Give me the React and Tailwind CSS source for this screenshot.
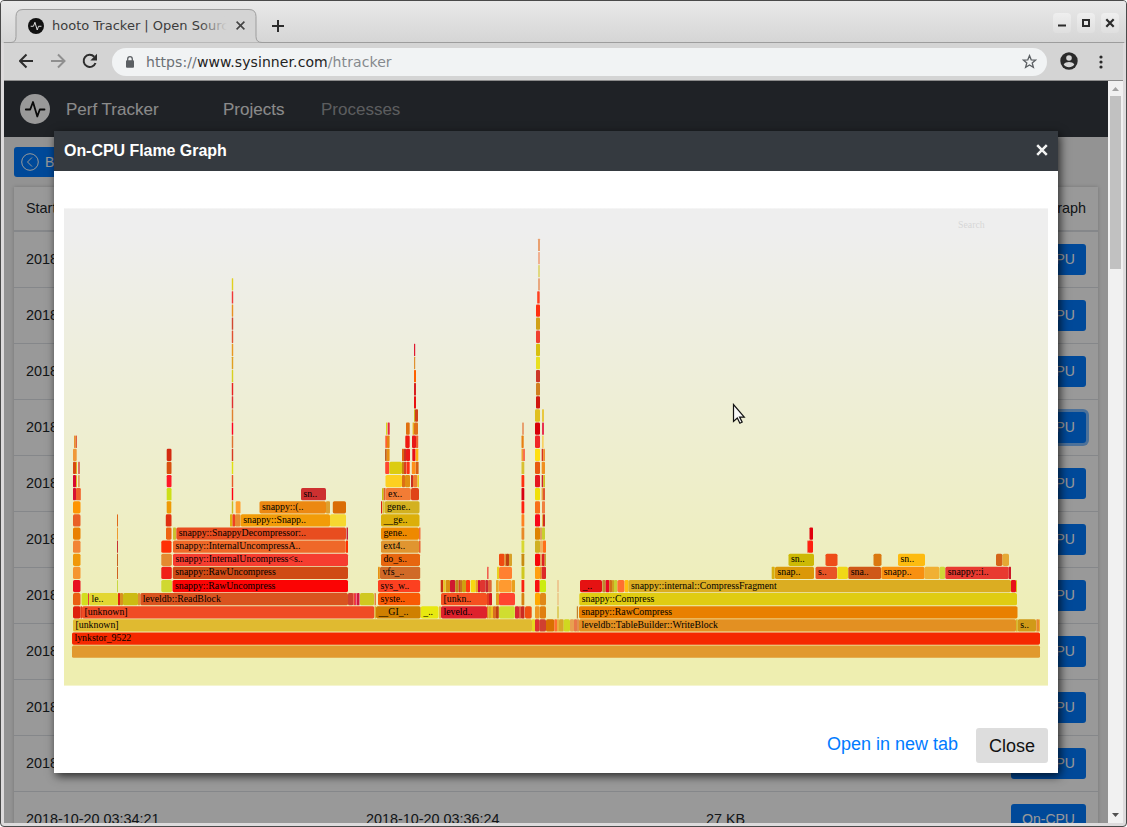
import React from "react";

const BASE_Y = 645.5;
const STEP = 13.12;

// Each frame is [left, right, colour, label?]; index 0 is the bottom of the stack.
const frames = [
  [[72, 1040, "#e1992e"]],
  [[72, 1040, "#f52800", "lynkstor_9522"]],
  [[73, 532, "#e0ba30", "[unknown]"], [532, 535, "#e6d820"], [535, 539.2, "#dd3030"], [539.2, 546, "#d04030"], [546, 554.3, "#d97000"], [554.3, 557, "#ff7030"], [557, 559, "#e8b040"], [559, 563.7, "#d8a828"], [563.7, 570, "#d0d820"], [570, 574, "#e8a050"], [574, 577, "#e87848"], [577, 579, "#e09050"], [579, 1016, "#e39022", "leveldb::TableBuilder::WriteBlock"], [1016, 1017.7, "#d8b828"], [1017.7, 1036, "#d09a18", "s.."], [1036.3, 1039, "#e88830"], [1039, 1040, "#f0b030"]],
  [[73, 80.5, "#de200d"], [80.5, 82, "#e04020"], [82, 374.3, "#f04c24", "[unknown]"], [374.6, 376, "#d8b030"], [376, 420.6, "#cf8000", "__GI_.."], [420.8, 438.5, "#e8e80f", "_.."], [439, 441, "#e8b840"], [441, 487, "#de222c", "leveld.."], [487, 488.5, "#e88020"], [488.5, 491, "#d8b020"], [491, 493, "#f0c020"], [493, 496, "#d87020"], [496, 498.8, "#c04010"], [499, 514.8, "#d0dd30"], [515, 519, "#d82830"], [519, 521, "#e06040"], [521, 524.5, "#cc2a20"], [525, 531.7, "#f05010"], [535, 539.5, "#ee9820"], [539.7, 546, "#e08010"], [557.3, 558.7, "#d8c040"], [576.8, 578, "#c08030"], [579, 1017.5, "#e98000", "snappy::RawCompress"]],
  [[73, 80.5, "#ea5f12"], [81.5, 88, "#d3dd20"], [88, 89, "#e04040"], [89, 118, "#e3d732", "le.."], [118, 120, "#e02010"], [120, 123, "#d89020"], [123, 138, "#ccbb12"], [138, 140, "#e09030"], [140.3, 348, "#d9541f", "leveldb::ReadBlock"], [348, 353.3, "#d04030"], [353.4, 355, "#f04030"], [355, 356.6, "#e83060"], [357, 359.5, "#d01840"], [360, 374, "#d0c820"], [374.5, 376, "#e08040"], [378, 420.2, "#f85a05", "syste.."], [441, 487, "#f55020", "[unkn.."], [487, 489, "#e04020"], [489, 492, "#d81820"], [496, 499, "#e0a020"], [499, 515, "#ff4430"], [521.5, 524.3, "#d88010"], [535, 540, "#ffa800"], [540, 546, "#e08818"], [557.3, 558.7, "#ecc080"], [579.3, 1017, "#e0cc12", "snappy::Compress"]],
  [[73, 80.5, "#e81020"], [117, 118, "#c8d840"], [161.3, 172, "#d0d830"], [172.5, 348, "#fb0404", "snappy::RawUncompress"], [378, 420.2, "#fc4020", "sys_w.."], [440.7, 443.3, "#c83010"], [443.3, 445.5, "#e8c820"], [445.7, 450, "#d89010"], [450, 455.3, "#d01830"], [455.3, 458.6, "#c08818"], [458.6, 460, "#d84020"], [460, 462, "#c87020"], [462, 466, "#d0a010"], [466, 470, "#ff3a10"], [470.7, 475.6, "#f8d810"], [475.6, 478, "#e8a020"], [478, 480, "#d01038"], [480, 485.5, "#e03530"], [485.5, 488, "#c82830"], [488, 491.7, "#e06838"], [496, 498.7, "#e8a828"], [499, 511.7, "#ff9a30"], [512, 515, "#e8a020"], [521.5, 524.3, "#fa2010"], [535, 539.7, "#f81010"], [539.8, 546, "#ccec10"], [557.3, 558.7, "#edb880"], [580, 602, "#e51212", "_.."], [602.3, 605.7, "#c08830"], [605.7, 609.3, "#e80820"], [609.3, 612, "#d07018"], [612, 614, "#d0a020"], [614, 617.3, "#c8d030"], [617.4, 624.5, "#ff7030"], [624.7, 628.5, "#ffc010"], [628.5, 1011, "#dbad22", "snappy::internal::CompressFragment"], [1011, 1016, "#e8101c"], [1016, 1017, "#d8c020"]],
  [[73, 80.5, "#f59530"], [117, 118, "#d06020"], [161.3, 171.8, "#f02018"], [172.8, 348, "#d04a15", "snappy::RawUncompress"], [378, 379.8, "#e89010"], [380, 420.2, "#d06a28", "vfs_.."], [487, 488.6, "#f06050"], [497, 499, "#e8d020"], [499, 512, "#ff8030"], [521.5, 524.5, "#d0c820"], [535, 540, "#ffa010"], [540, 541.7, "#e89020"], [541.7, 546, "#dd2828"], [771.7, 774.7, "#d8b010"], [775, 814, "#db9808", "snap.."], [815.5, 837, "#e85426", "s.."], [837.3, 848, "#f0d818"], [848.3, 881, "#cf5818", "sna.."], [881.3, 924.5, "#f89010", "snapp.."], [924.5, 939.5, "#f0b034"], [939.7, 945, "#d0d838"], [945.3, 1008.7, "#e83a30", "snappy::i.."], [1008.8, 1011, "#cc1828"]],
  [[73, 80.5, "#f09808"], [117, 118, "#c86020"], [161.3, 171.8, "#e48a30"], [173, 348, "#f63d30", "snappy::InternalUncompress<s.."], [381, 420, "#e7660f", "do_s.."], [499, 504.6, "#f04a10"], [504.6, 506, "#e09030"], [506, 509, "#c04010"], [509, 512, "#d8a028"], [521.5, 524.3, "#c88c10"], [535, 540, "#f80808"], [540, 542, "#e8a060"], [542, 544.7, "#e02020"], [544.7, 546, "#c8a030"], [788.5, 814, "#cdb905", "sn.."], [825.5, 837.5, "#ee4c18"], [873.5, 881.5, "#da7810"], [898, 925, "#fdbb10", "sn.."], [996, 1002.5, "#d46418"], [1002.5, 1009, "#e5a934"]],
  [[73, 80.5, "#f28535"], [117, 118, "#c83030"], [161.3, 171.5, "#ff3005"], [173, 345.8, "#ef6828", "snappy::InternalUncompressA.."], [346, 348, "#ff3000"], [381, 419, "#e09530", "ext4.."], [419, 420.5, "#e86030"], [521.5, 524.3, "#d8d830"], [535, 540, "#d0b020"], [540, 543, "#f0b060"], [543, 546, "#ff7018"], [807, 808.5, "#f08060"], [808, 813, "#ff2010"]],
  [[73, 80.5, "#e98000"], [117, 118, "#ee9830"], [166, 171.5, "#ee6410"], [173, 176, "#ccc030"], [176.3, 346, "#e84d1f", "snappy::SnappyDecompressor:.."], [346.5, 348, "#c02040"], [381, 419, "#ee8900", "gene.."], [419, 420.5, "#f07040"], [521.5, 524.3, "#e88a28"], [535, 540, "#de8400"], [540, 542, "#e0a060"], [542, 545, "#c8d030"], [809.5, 813, "#e0000d"]],
  [[73, 80.5, "#e96025"], [117, 118, "#e06818"], [165.8, 171.5, "#e03010"], [230, 232.5, "#e0b010"], [232.5, 235, "#f04020"], [235, 240.5, "#e88c30"], [240.7, 330, "#f29c08", "snappy::Snapp.."], [330, 346, "#f6d830"], [381, 419.5, "#dcaf0a", "__ge.."], [521.5, 524.3, "#ff8020"], [535, 540, "#f80818"], [542, 543, "#e8b040"], [543, 545, "#d03020"]],
  [[73, 80.5, "#fe9503"], [166.7, 171.3, "#ee9a05"], [231.8, 233.2, "#d0b820"], [235.7, 240.5, "#ffa030"], [259.5, 326, "#ec8812", "snappy::(.."], [326, 330, "#dda030"], [332.8, 346, "#da6c05"], [381, 382.2, "#d82010"], [382.6, 384.4, "#e0c030"], [384.5, 419.5, "#d3b120", "gene.."], [521.5, 524.3, "#ff2010"], [535, 540, "#f87018"], [542, 545, "#f08040"]],
  [[73, 76, "#d81030"], [76, 80.8, "#f06028"], [166.7, 171.5, "#ccdf18"], [231.8, 233.2, "#ff0010"], [301, 326, "#cd3030", "sn.."], [382, 383.7, "#c8c010"], [383.7, 385.5, "#e06030"], [385.6, 410.8, "#f27c35", "ex.."], [411, 419, "#e04418"], [521.5, 524.3, "#d80010"], [535, 540, "#f0e008"], [541.6, 543, "#e8a040"], [543, 545, "#e05830"]],
  [[73, 76, "#d80830"], [76, 77, "#e0c020"], [78, 79.8, "#e8a060"], [166.7, 171.5, "#ff1828"], [231.8, 233.2, "#e85828"], [385.5, 402, "#fdd020"], [402, 405, "#dc7014"], [405, 410, "#e09010"], [411, 413, "#c83020"], [413, 417.5, "#f08030"], [417.5, 419, "#e8d020"], [521.5, 524.3, "#ff3010"], [535, 540, "#e51820"], [541.7, 543.3, "#d02030"], [543.3, 545, "#d0c020"]],
  [[73, 76, "#d84810"], [76, 77, "#d8b820"], [78, 80, "#e07060"], [166.7, 171.5, "#d8500f"], [231.8, 233.2, "#e0e010"], [385.2, 389.2, "#ff4530"], [389.3, 402, "#dccc10"], [402, 404, "#c88010"], [404, 406.2, "#d84020"], [406.5, 409.7, "#ff3010"], [411.8, 415.5, "#ff9018"], [415.7, 418.6, "#d86010"], [521.5, 524.3, "#d8c030"], [535, 540, "#e85a10"], [541.7, 545, "#f09020"]],
  [[73, 76.7, "#f09838"], [166.7, 171.5, "#d32a10"], [231.8, 233.2, "#d83820"], [385, 386.8, "#c06020"], [386.8, 389.6, "#e89010"], [402, 404, "#e06010"], [404, 406, "#c83020"], [406, 410, "#ec1818"], [412.3, 415.5, "#e81018"], [415.7, 418.3, "#ffb010"], [521.5, 523, "#f0a030"], [523, 525, "#f87050"], [535, 540, "#ffe010"], [541.7, 543.2, "#d83020"], [543.2, 545, "#ee9030"]],
  [[74, 75.8, "#e89030"], [75.8, 77, "#e06040"], [231.8, 233.2, "#e07030"], [385.3, 387, "#ff6030"], [387, 389.6, "#e88010"], [405.3, 409.7, "#f01810"], [412, 416, "#e81818"], [416, 418.2, "#f06030"], [521.5, 523.7, "#e88010"], [535, 540, "#f02828"], [542, 543.7, "#f8d060"]],
  [[231.8, 233.2, "#ff0020"], [386, 387.3, "#d8d820"], [387.7, 389.7, "#e82840"], [406, 409.7, "#e07010"], [412.6, 414, "#e8b020"], [414, 418, "#e07018"], [522, 524, "#e8a070"], [535, 540, "#d80008"], [542, 544, "#e83050"]],
  [[231.8, 233.2, "#e08030"], [414, 415, "#c8b820"], [415, 418, "#d04018"], [535, 540, "#e0c020"], [542, 544, "#e8c840"]],
  [[231.8, 233.2, "#e03030"], [414, 416, "#e81010"], [536, 540, "#d01810"]],
  [[231.8, 233.2, "#e82020"], [414, 416, "#d82020"], [536, 540, "#d08020"]],
  [[231.8, 233.2, "#d8d020"], [414, 416, "#ff6000"], [536, 540, "#cc3828"]],
  [[231.8, 233.2, "#e0a020"], [414, 415.2, "#e09030"], [536, 540, "#e8e020"]],
  [[231.8, 233.2, "#e89820"], [414, 415.2, "#e01830"], [536, 540, "#d8c010"]],
  [[231.8, 233.2, "#e05030"], [536, 540, "#f04030"]],
  [[231.8, 233.2, "#d04830"], [536, 540, "#d0a018"]],
  [[231.8, 233.2, "#e89020"], [536, 540, "#ff3010"]],
  [[231.8, 233.2, "#f03838"], [537.2, 539.7, "#ff4020"]],
  [[231.8, 233.2, "#e0d020"], [538, 540, "#e8a880"]],
  [[538, 540, "#e0d880"]],
  [[538, 540, "#f0b090"]],
  [[538, 540, "#e8a070"]],
];

function FlameGraph() {
  return (
    <svg className="block h-[478px] w-[984px] font-['Liberation_Serif',serif]" viewBox="64 208 984 478">
      <defs>
        <linearGradient id="flame-bg" x1="0" y1="0" x2="0" y2="1">
          <stop offset="5%" stopColor="#eeeeee" />
          <stop offset="95%" stopColor="#eeeeb0" />
        </linearGradient>
      </defs>
      <rect x="64" y="208.4" width="984" height="477.2" fill="url(#flame-bg)" />
      <text x="958" y="227.500" fontSize="9.84" fill="#000" opacity="0.1">Search</text>
      {frames.map((row, level) =>
        row.map(([left, right, color, label]) => {
          const top = BASE_Y - STEP * level;
          return (
            <g key={level + "-" + left}>
              <rect x={left} y={top} width={right - left} height="12.3" rx={Math.min(1.64, (right - left) / 4)} fill={color} />
              {label && <text x={left + 2.46} y={top + 8.6} fontSize="9.84" fill="#000">{label}</text>}
            </g>
          );
        })
      )}
    </svg>
  );
}

function Pulse({ className, disc, line }) {
  return (
    <svg className={className} viewBox="0 0 30 30">
      <circle cx="15" cy="15" r="15" fill={disc} />
      <path d="M5.800 15.500h4.400L13 8l4.300 14.500 2.500-7h4.700" fill="none" stroke={line} strokeWidth="1.800" strokeLinejoin="round" strokeLinecap="round" />
    </svg>
  );
}

function WindowButton({ children }) {
  return (
    <div className="flex h-5 w-[18px] items-center justify-center rounded bg-linear-to-b from-[#efefef] to-[#dfdfdf]">
      <svg className="h-5 w-[18px]" viewBox="0 0 18 20" fill="none" stroke="#2b2b2b" strokeWidth="2">{children}</svg>
    </div>
  );
}

function TabStrip() {
  return (
    <div className="relative flex h-[42px] shrink-0 items-start bg-linear-to-b from-[#e9e9e9] to-[#d5d5d5]">
      <svg className="absolute inset-x-0 top-0 h-[42px] w-full" viewBox="0 0 1125 42">
        <path d="M3 41.500h7q5 0 5-6V15.500q0-7 7-7h226q7 0 7 7V35.500q0 6 6 6h862V42H3z" fill="#d4d4d4" stroke="#9d9d9d" />
      </svg>
      <div className="relative flex h-[42px] w-full items-start">
        <div className="ml-[27px] flex h-8 w-[228px] items-center pt-[18px]">
          <Pulse className="h-4 w-4 shrink-0" disc="#111" line="#e5e5e5" />
          <div className="relative ml-2 w-[175px] shrink-0 overflow-hidden whitespace-nowrap text-[13px] leading-5 text-[#3c3c3c]">
            hooto Tracker | Open Source
            <div className="absolute inset-y-0 right-0 w-7 bg-linear-to-r from-[#d4d4d400] to-[#d4d4d4]" />
          </div>
          <svg className="mb-px ml-[9px] h-[9px] w-[9px] shrink-0" viewBox="0 0 9 9" stroke="#444" strokeWidth="1.600"><path d="M.6.6l7.800 7.800M8.400.6L.6 8.400" /></svg>
        </div>
        <svg className="ml-4 mt-[19px] h-3 w-3" viewBox="0 0 12 12" stroke="#2c2c2c" strokeWidth="2"><path d="M0 6h12M6 0v12" /></svg>
        <div className="ml-auto mr-[7px] mt-3 flex gap-1.5">
          <WindowButton><path d="M5 12.500h8" /></WindowButton>
          <WindowButton><path d="M6 7h6v6H6z" /></WindowButton>
          <WindowButton><path d="M5.300 6.300l7.400 7.400m0-7.400l-7.400 7.400" strokeWidth="2.200" /></WindowButton>
        </div>
      </div>
    </div>
  );
}

function Toolbar() {
  return (
    <div className="mx-[3px] flex h-[38px] shrink-0 items-center border-b border-[#8c8c8c] bg-[#d4d4d4] pl-[15px]">
      <svg className="mb-[2px] h-4 w-[78px]" viewBox="0 0 78 16" fill="none" stroke="#2d2d2d" strokeWidth="2">
        <path d="M14 8H1.500M7.500 1.500L1 8l6.500 6.500" />
        <path d="M32 8h13M39 1.500L45.500 8l-6.500 6.500" stroke="#8f8f8f" />
        <path d="M76.500 10a6.100 6.100 0 1 1-1.300-6.300" />
        <path d="M78 .8v6.700h-6.700z" fill="#2d2d2d" stroke="none" />
      </svg>
      <div className="ml-[15px] flex h-7 w-[935px] items-center rounded-full bg-[#f1f3f4] pl-[14px] pr-[10px]">
        <svg className="h-3 w-2" viewBox="0 0 8 12"><path d="M1.700 5V3a2.300 2.300 0 0 1 4.600 0v2" fill="none" stroke="#5b5f63" strokeWidth="1.300" /><rect y="4.300" width="8" height="7.500" rx="1" fill="#5b5f63" /></svg>
        <div className="ml-3 whitespace-nowrap text-[14px] leading-5 tracking-[0.09px] text-[#85898d]"><span className="text-[#6b7074]">https://</span><span className="text-[#222]">www.sysinner.com</span>/htracker</div>
        <svg className="ml-auto h-[15px] w-[15px]" viewBox="0 0 15 15" fill="none" stroke="#5b5f63" strokeWidth="1.300"><path d="M7.500 1.600l1.700 4.200 4.500.3-3.500 2.900 1.200 4.400-3.900-2.400-3.900 2.400 1.200-4.400L1.300 6.100l4.500-.3z" /></svg>
      </div>
      <svg className="mb-px ml-[13px] h-[18px] w-[18px]" viewBox="0 0 18 18"><circle cx="9" cy="9" r="8.700" fill="#2a2a2a" /><circle cx="9" cy="6" r="2.800" fill="#d4d4d4" /><path d="M3.700 12.500c1-2 3.300-2.600 5.300-2.600s4.300.6 5.300 2.600a6.400 6.400 0 0 1-10.600 0z" fill="#d4d4d4" /></svg>
      <svg className="ml-[21px] h-[14px] w-1" viewBox="0 0 4 14" fill="#2a2a2a"><circle cx="2" cy="2" r="1.600" /><circle cx="2" cy="7" r="1.600" /><circle cx="2" cy="12" r="1.600" /></svg>
    </div>
  );
}

function TrackerTable() {
  return (
    <div className="ml-[10px] mt-[10px] w-[1084px] bg-white text-[14.4px] text-[#212529] shadow-[0_0_4px_rgba(0,0,0,0.2)]">
      <div className="flex h-[45px] items-center border-b-2 border-[#dee2e6] px-3">
        <span>Start</span>
        <span className="ml-auto">Graph</span>
      </div>
      {Array.from({ length: 11 }, (_, i) => (
        <div key={i} className="flex h-14 items-center border-b border-[#dee2e6] px-3 pb-px">
          <span className="w-[340px] pt-[2px]">2018-10-20 03:34:21</span>
          <span className="w-[340px] pt-[2px]">2018-10-20 03:36:24</span>
          <span className="pt-[2px]">27 KB</span>
          <span className={"ml-auto flex h-[31px] w-[75px] items-center justify-center rounded-[3px] bg-[#007bff] text-[14px] text-white " + (i === 3 ? "shadow-[0_0_0_3px_#80bdff]" : "")}>On-CPU</span>
        </div>
      ))}
    </div>
  );
}

function Modal() {
  return (
    <div className="absolute left-[54px] top-[131px] flex h-[642px] w-[1004px] flex-col bg-white shadow-[2px_3px_9px_rgba(0,0,0,0.75)]">
      <div className="flex h-10 shrink-0 items-center justify-between bg-[#353a40] px-[10px] text-[16px] font-bold text-white">
        <span className="tracking-[-0.05px]">On-CPU Flame Graph</span>
        <svg className="mt-[-2px] h-3 w-3" viewBox="0 0 12 12" stroke="#f2f2f2" strokeWidth="2.500"><path d="M1.200 1.200l9.600 9.600m0-9.600l-9.600 9.600" /></svg>
      </div>
      <div className="px-[10px] pt-[37px]">
        <FlameGraph />
      </div>
      <div className="mb-[10px] mt-auto flex items-center justify-end gap-[18px] pr-[10px] text-[18px]">
        <span className="pb-[3px] text-[#007bff]">Open in new tab</span>
        <div className="flex h-[35px] w-[72px] items-center justify-center rounded-[3px] bg-[#dddddd] pt-px text-[#111]">Close</div>
      </div>
    </div>
  );
}

export default function App() {
  return (
    <div className="relative flex h-[827px] w-[1127px] flex-col overflow-hidden rounded-[4px] border border-[#4a4a4a] bg-[#dddbdc] font-['DejaVu_Sans',sans-serif]">
      <TabStrip />
      <Toolbar />
      <div className="mx-[3px] flex h-[742px] shrink-0 overflow-hidden font-['Liberation_Sans',sans-serif]">
        <div className="relative h-[742px] w-[1104px] overflow-hidden bg-[#f5f5f5]">
          <div className="flex h-14 items-center bg-[#353a40] pl-4 text-[17px] text-[#e8e8e8]">
            <Pulse className="h-[30px] w-[30px]" disc="#fff" line="#111" />
            <span className="ml-4 w-[157px] pt-[2px]">Perf Tracker</span>
            <span className="w-[98px] pt-[2px]">Projects</span>
            <span className="pt-[2px] text-[#9a9c9f]">Processes</span>
          </div>
          <div className="ml-[10px] mt-[10px] flex h-[30px] w-[80px] items-center rounded-[3px] bg-[#007bff] pl-[7px] text-[14px] text-white">
            <svg className="mr-[6px] h-[18px] w-[18px]" viewBox="0 0 18 18" fill="none" stroke="#fff"><circle cx="9" cy="9" r="8.300" /><path d="M11 4.500L6.500 9l4.500 4.500" /></svg>
            Back
          </div>
          <TrackerTable />
          <div className="absolute inset-0 bg-black/40" />
        </div>
        <div className="flex w-[15px] flex-col items-center bg-[#f1f1f1]">
          <svg className="mt-[6px] h-1 w-[7px]" viewBox="0 0 7 4"><path d="M0 4h7L3.500 0z" fill="#a3a3a3" /></svg>
          <div className="mt-[5px] h-[173px] w-[11px] bg-[#c1c1c1]" />
          <svg className="mb-[6px] mt-auto h-1 w-[7px]" viewBox="0 0 7 4"><path d="M0 0h7L3.500 4z" fill="#505050" /></svg>
        </div>
      </div>
      <div className="absolute -left-px -top-px font-['Liberation_Sans',sans-serif]">
        <Modal />
        <svg className="absolute left-[732px] top-[403px] h-[22px] w-[15px]" viewBox="0 0 15 22"><path d="M1.500 1.500v17l3.800-3.500 2.600 5.300 2.300-1.200-2.600-5h4.700z" fill="#f8f8f8" stroke="#111" strokeWidth="1.200" /></svg>
      </div>
    </div>
  );
}
